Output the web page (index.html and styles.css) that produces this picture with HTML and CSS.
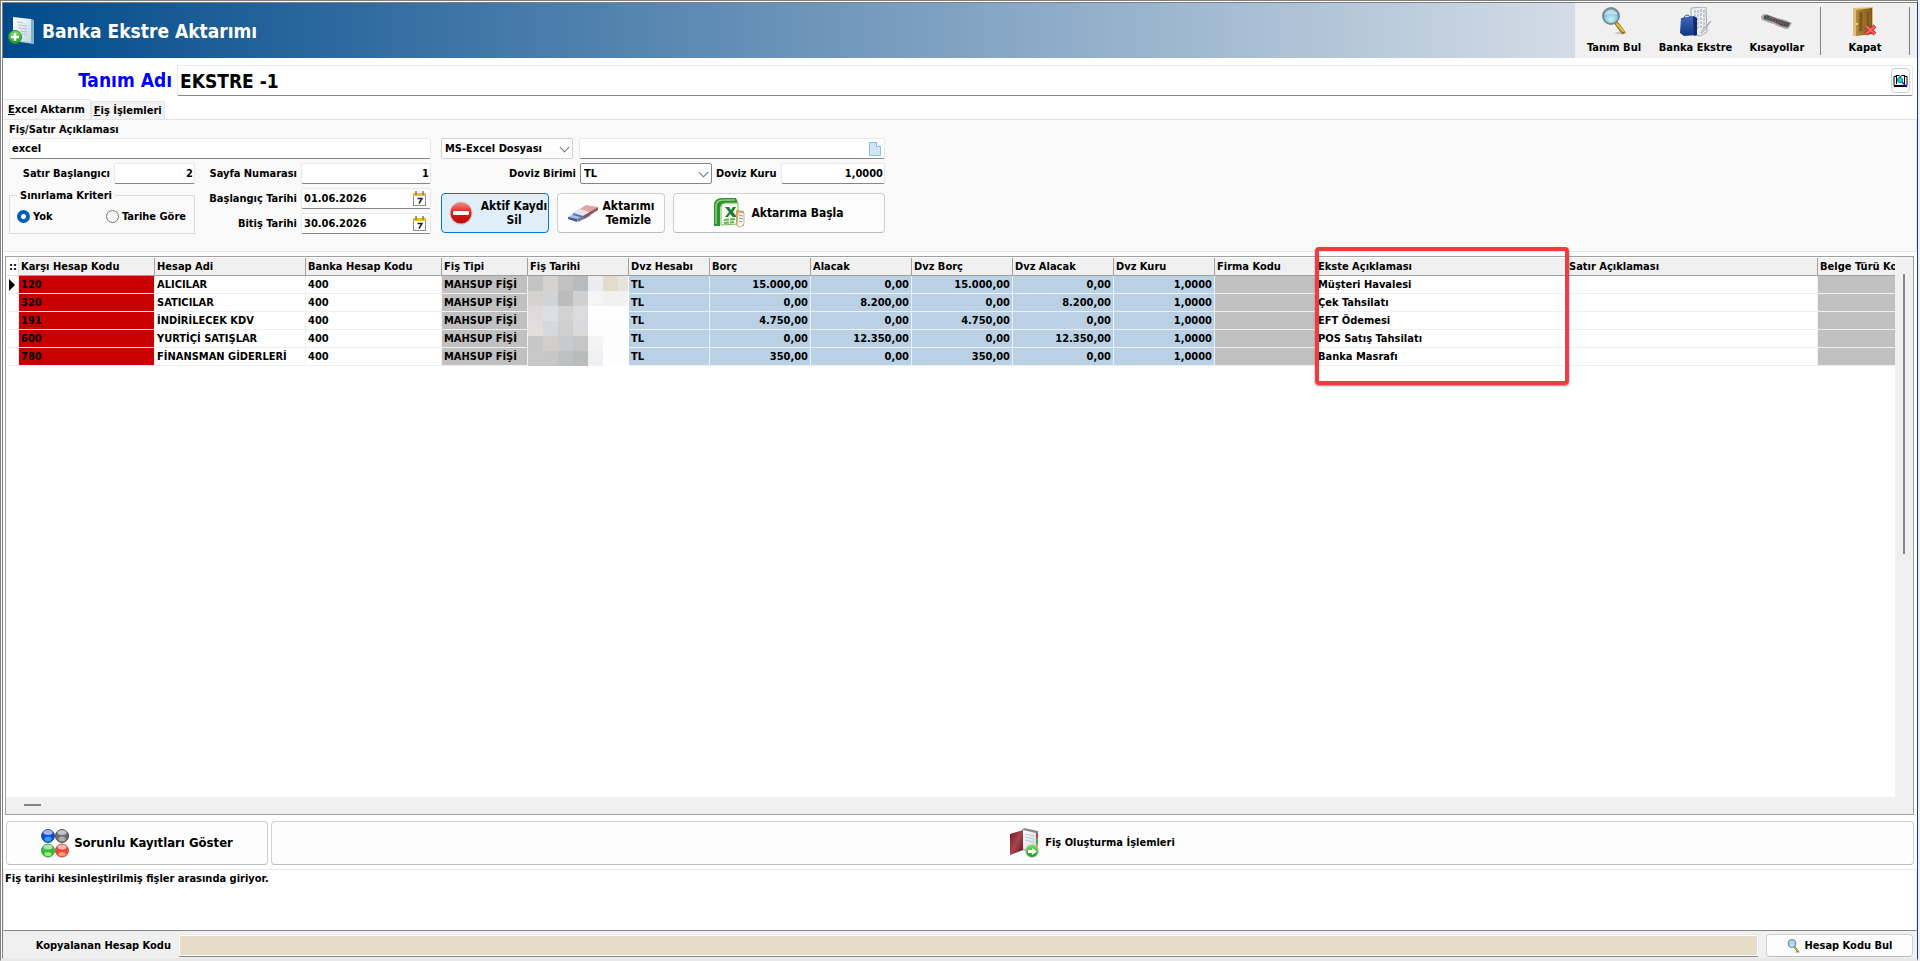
FILE: index.html
```html
<!DOCTYPE html>
<html lang="tr">
<head>
    <meta charset="UTF-8">
    <meta name="viewport" content="width=device-width, initial-scale=1.0">
    <title>Banka Ekstre Aktarımı</title>
    <link rel="stylesheet" href="styles.css">
</head>
<body>
<!-- shared gradients and the icons used more than once -->
<svg class="defs" width="0" height="0">
    <defs>
        <linearGradient id="gGreen" x1="0" y1="0" x2="0" y2="1"><stop offset="0" stop-color="#7ddc6a"/><stop offset="1" stop-color="#1d9a1d"/></linearGradient>
        <linearGradient id="gBlue" x1="0" y1="0" x2="0" y2="1"><stop offset="0" stop-color="#3d68c0"/><stop offset="1" stop-color="#143583"/></linearGradient>
        <linearGradient id="gDoor" x1="0" y1="0" x2="1" y2="0"><stop offset="0" stop-color="#b48a3e"/><stop offset="1" stop-color="#7d5413"/></linearGradient>
        <linearGradient id="gRed" x1="0" y1="0" x2="0" y2="1"><stop offset="0" stop-color="#f58a80"/><stop offset="0.5" stop-color="#e01a14"/><stop offset="1" stop-color="#b80d0d"/></linearGradient>
        <linearGradient id="gBook" x1="0" y1="0" x2="1" y2="1"><stop offset="0" stop-color="#6c1820"/><stop offset="0.5" stop-color="#a8464e"/><stop offset="1" stop-color="#5c1018"/></linearGradient>
        <linearGradient id="gPage" x1="0" y1="0" x2="1" y2="1"><stop offset="0" stop-color="#ffffff"/><stop offset="1" stop-color="#c3d6e2"/></linearGradient>
        <radialGradient id="gLens" cx="0.5" cy="0.7" r="0.7"><stop offset="0" stop-color="#c8f4fb"/><stop offset="1" stop-color="#5cabc9"/></radialGradient>
        <symbol id="icoSearch" viewBox="0 0 26 28">
            <ellipse cx="20" cy="26" rx="6" ry="1.5" fill="#c9c9c9"/>
            <path d="M14 15l3 3" stroke="#888" stroke-width="3"/>
            <path d="M16 17l6 8" stroke="#8a7418" stroke-width="4" stroke-linecap="round"/>
            <path d="M16 17l6 7" stroke="#e0c63a" stroke-width="2" stroke-linecap="round"/>
            <circle cx="10" cy="9" r="8" fill="url(#gLens)" stroke="#7c8a94" stroke-width="2"/>
            <path d="M4 8a6 5 0 0 1 12 0q-6-3-12 0z" fill="#fff" opacity="0.5"/>
        </symbol>
        <symbol id="icoCal" viewBox="0 0 14 16">
            <rect x="0.5" y="3.5" width="12" height="11" fill="#fff" stroke="#8d8d8d"/>
            <rect x="0" y="2" width="13" height="3" fill="#f2bd2a"/>
            <path d="M3 0v4M10 0v4" stroke="#777" stroke-width="1.5"/>
            <path d="M4.500 7.500h4.500l-3 5" fill="none" stroke="#222" stroke-width="1.500"/>
        </symbol>
    </defs>
</svg>

<div class="window">
    <header class="title-bar">
        <div class="title">
            <svg width="28" height="30" viewBox="0 0 28 30">
                <path d="M5 2l21 2v24l-21-3z" fill="#a8cddd"/>
                <path d="M5 1l18 2v23l-18-2z" fill="url(#gPage)"/>
                <path d="M23 3l3 1v24l-3-2z" fill="#7fb2c8"/>
                <path d="M9 6l6 1M10 9l9 1M10 12l9 1M12 15l7 1M14 18l5 1" stroke="#b8c0c5"/>
                <circle cx="7" cy="21" r="6.500" fill="url(#gGreen)" stroke="#2b8a2b"/>
                <path d="M7 17v8M3 21h8" stroke="#fff" stroke-width="2.500"/>
            </svg>
            <h1>Banka Ekstre Aktarımı</h1>
        </div>
        <nav class="toolbar">
            <button type="button" class="tool">
                <svg width="26" height="28"><use href="#icoSearch"/></svg>
                <span>Tanım Bul</span>
            </button>
            <button type="button" class="tool wide">
                <svg width="32" height="30" viewBox="0 0 32 30">
                    <path d="M11 1l15-1 1 25-7 4-9-2z" fill="#eceef1" stroke="#a4a9b0"/>
                    <path d="M15 3v8M18 3v19M21 2v20M24 3v20" stroke="#9aa0a8" stroke-dasharray="3 1"/>
                    <path d="M31 14l-8 11-2 1 1-3z" fill="#dfe3e6" stroke="#8f9499" stroke-width="0.700"/>
                    <path d="M1 11l12-2 4 2v17l-13 1-4-3z" fill="url(#gBlue)"/>
                    <path d="M13 9l4 2v17l-3 1z" fill="#12296a"/>
                    <path d="M4 12c0-5 6-5 6-1" fill="none" stroke="#1c3c8c"/>
                </svg>
                <span>Banka Ekstre</span>
            </button>
            <button type="button" class="tool">
                <svg width="32" height="28" viewBox="0 0 32 28">
                    <path d="M0 10q1-3 5-3l11 4q8 1 15 5l-3 5q-2 2-6 0-6-2-9-4-5-1-12-4z" fill="#a6a6a6"/>
                    <path d="M3 9l3-1 10 4 13 4-2 4-6-1-8-4-10-3z" fill="#4a4a4a"/>
                    <path d="M5 9.500l22 8M5 11.500l18 6M9 10l17 5" stroke="#8e8e8e" stroke-width="0.700" stroke-dasharray="1.500 1.500"/>
                    <path d="M13 12l2 1M18 15l2 1" stroke="#b33"/>
                </svg>
                <span>Kısayollar</span>
            </button>
            <button type="button" class="tool close">
                <svg width="26" height="30" viewBox="0 0 26 30">
                    <path d="M1 1l20-1v27l-20 2z" fill="#e0bf72"/>
                    <path d="M4 3l16-2v26l-16 2z" fill="url(#gDoor)"/>
                    <path d="M7 5l4-1v20l-4 1zM14 4l4-1v20l-4 1z" fill="#80581a" stroke="#a27a34" stroke-width="0.700"/>
                    <circle cx="5" cy="17" r="1" fill="#fbe597"/>
                    <path d="M14 19l9 8M23 19l-9 8" stroke="#a92525" stroke-width="4"/>
                    <path d="M14 19l9 8M23 19l-9 8" stroke="#f46060" stroke-width="2.500"/>
                </svg>
                <span>Kapat</span>
            </button>
        </nav>
    </header>

    <div class="name-row">
        <label for="tanim">Tanım Adı</label>
        <div class="field name-field">
            <input type="text" id="tanim" value="EKSTRE -1">
            <button type="button" class="look-up" aria-label="Ara">
                <svg width="15" height="14" viewBox="0 0 15 14">
                    <path d="M1 2.500h2v-1h3l1.500 1 1.500-1h3v1h2v9h-13z" fill="#fff" stroke="#000"/>
                    <path d="M3.500 2v8M11.500 2v8M1 12.500h12" stroke="#000"/>
                    <circle cx="7" cy="6" r="2.500" fill="#1fd8e8" stroke="#077"/>
                    <path d="M9 8l5 5" stroke="#2020c0" stroke-width="1.500"/>
                </svg>
            </button>
        </div>
    </div>

    <div class="tabs" role="tablist">
        <button type="button" role="tab" class="tab active"><u>E</u>xcel Aktarım</button>
        <button type="button" role="tab" class="tab"><u>F</u>iş İşlemleri</button>
    </div>

    <section class="panel">
        <label class="caption" for="aciklama">Fiş/Satır Açıklaması</label>
        <div class="form">
            <div class="left-form">
                <input type="text" class="field full" id="aciklama" value="excel">

                <div class="pair">
                    <label for="satir">Satır Başlangıcı</label>
                    <input type="text" class="field num" id="satir" value="2">
                </div>
                <label for="sayfa">Sayfa Numarası</label>
                <input type="text" class="field num" id="sayfa" value="1">

                <fieldset class="criteria">
                    <legend>Sınırlama Kriteri</legend>
                    <label><input type="radio" name="kriter" checked>Yok</label>
                    <label><input type="radio" name="kriter">Tarihe Göre</label>
                </fieldset>
                <label for="bas">Başlangıç Tarihi</label>
                <div class="field with-icon">
                    <input type="text" id="bas" value="01.06.2026">
                    <svg width="14" height="16"><use href="#icoCal"/></svg>
                </div>
                <label for="bitis">Bitiş Tarihi</label>
                <div class="field with-icon">
                    <input type="text" id="bitis" value="30.06.2026">
                    <svg width="14" height="16"><use href="#icoCal"/></svg>
                </div>
            </div>

            <div class="right-form">
                <div class="line">
                    <div class="drop soft">
                        <select aria-label="Dosya türü"><option>MS-Excel Dosyası</option></select>
                    </div>
                    <div class="field with-icon grow">
                        <input type="text" aria-label="Dosya">
                        <svg width="12" height="14" viewBox="0 0 12 14"><path d="M0.500 0.500h7l4 4v9h-11z" fill="#cfe5fa" stroke="#8ebbe8"/><path d="M7.500 0.500v4h4" fill="#fff" stroke="#8ebbe8"/></svg>
                    </div>
                </div>
                <div class="line currency">
                    <label for="birim">Doviz Birimi</label>
                    <div class="drop"><select id="birim"><option>TL</option></select></div>
                    <label for="kur">Doviz Kuru</label>
                    <input type="text" class="field num" id="kur" value="1,0000">
                </div>
                <div class="actions">
                    <button type="button" class="btn focused">
                        <svg width="24" height="24" viewBox="0 0 24 24">
                            <circle cx="12" cy="12" r="11.500" fill="#c9c9c9"/>
                            <circle cx="12" cy="12" r="10.500" fill="url(#gRed)"/>
                            <rect x="4" y="10" width="16" height="4" rx="1" fill="#fff"/>
                        </svg>
                        <span>Aktif Kaydı<br>Sil</span>
                    </button>
                    <button type="button" class="btn">
                        <svg width="30" height="20" viewBox="0 0 30 20">
                            <path d="M0 14l12-7 10 3-13 8z" fill="#a9c0e6"/>
                            <path d="M0 14l9 2v3l-9-3z" fill="#3d5a94"/>
                            <path d="M9 16l13-6v3l-12 6z" fill="#6780b4"/>
                            <path d="M5 10l13-8 12 2-15 9z" fill="#e2a3a3"/>
                            <path d="M5 10l7-4 10 3-7 4z" fill="#dce6f7"/>
                            <path d="M15 13l15-9v3l-14 9z" fill="#93535a"/>
                            <path d="M5 10l10 3v2l-10-3z" fill="#5871a6"/>
                        </svg>
                        <span>Aktarımı<br>Temizle</span>
                    </button>
                    <button type="button" class="btn">
                        <svg width="32" height="30" viewBox="0 0 32 30">
                            <path d="M0 28v-20q0-8 8-8h14l2 5h-12q-6 0-6 6v17z" fill="#2f8f28"/>
                            <path d="M2 26v-17q0-7 7-7h12" fill="none" stroke="#8ed47c" stroke-width="1.500"/>
                            <path d="M7 9q0-4 4-4h13v21l-17 1z" fill="#f3faf0" stroke="#76b667"/>
                            <path d="M11 9h4l2 3 2-3h3l-3 5 4 5h-4l-3-3-2 3h-3l4-5z" fill="#217a2b"/>
                            <path d="M10 22l12-1M10 25l10-1" stroke="#64b554" stroke-width="2" stroke-dasharray="5 1"/>
                            <path d="M22 12l8 1v15l-8-1z" fill="#d7a84a"/>
                            <path d="M24 14l6 1v11l-3 3-4-1z" fill="#f5f2e8" stroke="#a7a08d" stroke-width="0.700"/>
                            <path d="M25 17l4 1M25 20l4 1M25 23l3 1" stroke="#8c9bb0"/>
                        </svg>
                        <span>Aktarıma Başla</span>
                    </button>
                </div>
            </div>
        </div>
    </section>

    <section class="grid">
        <div class="grid-view">
            <table>
                <colgroup>
                    <col class="c-mark"><col class="c-code"><col class="c-name"><col class="c-code"><col class="c-type"><col class="c-money"><col class="c-cur">
                    <col class="c-money"><col class="c-money"><col class="c-money"><col class="c-money"><col class="c-money"><col class="c-money">
                    <col class="c-text"><col class="c-text"><col class="c-doc">
                </colgroup>
                <thead>
                    <tr>
                        <th class="mark">::</th><th>Karşı Hesap Kodu</th><th>Hesap Adi</th><th>Banka Hesap Kodu</th><th>Fiş Tipi</th><th>Fiş Tarihi</th><th>Dvz Hesabı</th>
                        <th>Borç</th><th>Alacak</th><th>Dvz Borç</th><th>Dvz Alacak</th><th>Dvz Kuru</th><th>Firma Kodu</th>
                        <th>Ekste Açıklaması</th><th>Satır Açıklaması</th><th>Belge Türü Kodu</th>
                    </tr>
                </thead>
                <tbody>
                    <tr>
                        <td class="mark"><svg width="6" height="12" viewBox="0 0 6 12"><path d="M0 0l6 6-6 6z"/></svg></td>
                        <td class="red">120</td><td>ALICILAR</td><td>400</td><td class="gray">MAHSUP FİŞİ</td>
                        <td class="masked" rowspan="5">
                            <svg width="100" height="90" viewBox="0 0 100 90" shape-rendering="crispEdges">
                                <g stroke-width="15">
                                    <path d="M0 7.500h15" stroke="#c3c3c3"/><path d="M15 7.500h15" stroke="#d3d2d1"/><path d="M30 7.500h15" stroke="#c4c2c0"/><path d="M45 7.500h15" stroke="#b9babb"/><path d="M60 7.500h15" stroke="#ebecef"/><path d="M75 7.500h15" stroke="#e3dccb"/><path d="M90 7.500h10" stroke="#e6e2dc"/>
                                    <path d="M0 22.500h15" stroke="#d5d3d0"/><path d="M15 22.500h15" stroke="#d1d3d5"/><path d="M30 22.500h15" stroke="#bcbcbc"/><path d="M45 22.500h15" stroke="#cfd0d2"/><path d="M60 22.500h15" stroke="#f5f5f5"/><path d="M75 22.500h25" stroke="#f1f1f1"/>
                                    <path d="M0 37.500h15" stroke="#dedadb"/><path d="M15 37.500h15" stroke="#dddfe1"/><path d="M30 37.500h15" stroke="#d2d2d2"/><path d="M45 37.500h15" stroke="#dadbde"/><path d="M60 37.500h40" stroke="#fefefe"/>
                                    <path d="M0 52.500h15" stroke="#e0dfdd"/><path d="M15 52.500h15" stroke="#d7d8d9"/><path d="M30 52.500h15" stroke="#cfcfcf"/><path d="M45 52.500h15" stroke="#d9dadc"/><path d="M60 52.500h40" stroke="#fcfcfc"/>
                                    <path d="M0 67.500h15" stroke="#c6c8c7"/><path d="M15 67.500h15" stroke="#d1cecb"/><path d="M30 67.500h15" stroke="#c8cacd"/><path d="M45 67.500h15" stroke="#c6c6c6"/><path d="M60 67.500h15" stroke="#f3f5f5"/><path d="M75 67.500h25" stroke="#fdfdfd"/>
                                    <path d="M0 82.500h15" stroke="#c8c8c8"/><path d="M15 82.500h15" stroke="#c7c7c5"/><path d="M30 82.500h15" stroke="#bec1c4"/><path d="M45 82.500h15" stroke="#babbbb"/><path d="M60 82.500h15" stroke="#eff0f3"/><path d="M75 82.500h25" stroke="#fdfdfd"/>
                                </g>
                            </svg>
                        </td>
                        <td class="blue">TL</td><td class="blue r">15.000,00</td><td class="blue r">0,00</td><td class="blue r">15.000,00</td><td class="blue r">0,00</td><td class="blue r">1,0000</td>
                        <td class="gray"></td><td>Müşteri Havalesi</td><td></td><td class="gray"></td>
                    </tr>
                    <tr>
                        <td class="mark"></td>
                        <td class="red">320</td><td>SATICILAR</td><td>400</td><td class="gray">MAHSUP FİŞİ</td>
                        <td class="blue">TL</td><td class="blue r">0,00</td><td class="blue r">8.200,00</td><td class="blue r">0,00</td><td class="blue r">8.200,00</td><td class="blue r">1,0000</td>
                        <td class="gray"></td><td>Çek Tahsilatı</td><td></td><td class="gray"></td>
                    </tr>
                    <tr>
                        <td class="mark"></td>
                        <td class="red">191</td><td>İNDİRİLECEK KDV</td><td>400</td><td class="gray">MAHSUP FİŞİ</td>
                        <td class="blue">TL</td><td class="blue r">4.750,00</td><td class="blue r">0,00</td><td class="blue r">4.750,00</td><td class="blue r">0,00</td><td class="blue r">1,0000</td>
                        <td class="gray"></td><td>EFT Ödemesi</td><td></td><td class="gray"></td>
                    </tr>
                    <tr>
                        <td class="mark"></td>
                        <td class="red">600</td><td>YURTİÇİ SATIŞLAR</td><td>400</td><td class="gray">MAHSUP FİŞİ</td>
                        <td class="blue">TL</td><td class="blue r">0,00</td><td class="blue r">12.350,00</td><td class="blue r">0,00</td><td class="blue r">12.350,00</td><td class="blue r">1,0000</td>
                        <td class="gray"></td><td>POS Satış Tahsilatı</td><td></td><td class="gray"></td>
                    </tr>
                    <tr>
                        <td class="mark"></td>
                        <td class="red">780</td><td>FİNANSMAN GİDERLERİ</td><td>400</td><td class="gray">MAHSUP FİŞİ</td>
                        <td class="blue">TL</td><td class="blue r">350,00</td><td class="blue r">0,00</td><td class="blue r">350,00</td><td class="blue r">0,00</td><td class="blue r">1,0000</td>
                        <td class="gray"></td><td>Banka Masrafı</td><td></td><td class="gray"></td>
                    </tr>
                </tbody>
            </table>
        </div>
        <div class="v-scroll"><div class="v-thumb"></div></div>
        <div class="h-scroll"><div class="h-thumb"></div></div>
        <div class="highlight"></div>
    </section>

    <div class="bottom-actions">
        <button type="button" class="btn big problems">
            <svg width="28" height="29" viewBox="0 0 28 29">
                <circle cx="7" cy="7" r="6.500" fill="#1745d8" stroke="#3b4f8c"/><circle cx="21" cy="7" r="6.500" fill="#6d6d6d" stroke="#505050"/>
                <circle cx="7" cy="21.500" r="6.500" fill="#38bd38" stroke="#4a944a"/><circle cx="21" cy="21.500" r="6.500" fill="#ee4a32" stroke="#b5554a"/>
                <g fill="#fff" opacity="0.600"><ellipse cx="7" cy="3.500" rx="4.500" ry="2.500"/><ellipse cx="21" cy="3.500" rx="4.500" ry="2.500"/><ellipse cx="7" cy="18" rx="4.500" ry="2.500"/><ellipse cx="21" cy="18" rx="4.500" ry="2.500"/></g>
                <ellipse cx="7" cy="10" rx="3.500" ry="2.500" fill="#29a8f0"/><ellipse cx="21" cy="10" rx="3.500" ry="2.500" fill="#aaa"/>
                <ellipse cx="7" cy="25" rx="3.500" ry="2" fill="#90f070"/><ellipse cx="21" cy="25" rx="3.500" ry="2" fill="#ff9a78"/>
            </svg>
            <span>Sorunlu Kayıtları Göster</span>
        </button>
        <button type="button" class="btn create">
            <svg width="30" height="30" viewBox="0 0 30 30">
                <path d="M12 2l2-2 14 3v22l-16-3z" fill="#8a8a8a"/>
                <path d="M13 2l13 3v19l-13-3z" fill="url(#gPage)"/>
                <path d="M15 6l9 2M15 9l9 2M15 12l9 2" stroke="#c0c8cc"/>
                <path d="M26 5h2v5h-2z" fill="#d33"/><path d="M26 11h2v4h-2z" fill="#3b3"/><path d="M26 16h2v4h-2z" fill="#e83"/>
                <path d="M0 6l13-4v20l-13 5z" fill="url(#gBook)"/>
                <circle cx="22" cy="23" r="6.500" fill="url(#gGreen)" stroke="#c9d8c9"/>
                <path d="M18 22h4v-2l5 3.500-5 3.500v-2h-4z" fill="#fff"/>
            </svg>
            <span>Fiş Oluşturma İşlemleri</span>
        </button>
    </div>

    <textarea class="log" aria-label="Mesajlar" readonly>Fiş tarihi kesinleştirilmiş fişler arasında giriyor.</textarea>

    <footer class="status">
        <label for="kopya">Kopyalanan Hesap Kodu</label>
        <input type="text" id="kopya" class="field copied">
        <button type="button" class="btn find">
            <svg width="13" height="14"><use href="#icoSearch"/></svg>
            <span>Hesap Kodu Bul</span>
        </button>
    </footer>
</div>
</body>
</html>
```
FILE: styles.css
```css
* {
    box-sizing: border-box;
}

body {
    margin: 0;
    background-color: #f0f0f0;
    font-family: "DejaVu Sans Condensed", "DejaVu Sans", sans-serif;
    font-size: 11px;
    font-weight: bold;
    line-height: 14px;
    color: #000;
}

button, input, select, textarea {
    font: inherit;
    color: inherit;
}

svg {
    display: block;
    flex: none;
}

.defs {
    position: absolute;
}

.window {
    display: flex;
    flex-direction: column;
    height: 100vh;
    margin-right: 2px;
    border: 3px double #808080;
    border-right: 1px solid #16398c;
    border-bottom: 3px solid #e8e8e8;
    background-color: #fff;
}

/* title bar */
.title-bar {
    display: flex;
    height: 55px;
    background: linear-gradient(to right, #004a8b, #d3dce6 82%);
}

.title {
    display: flex;
    align-items: center;
    gap: 6px;
    flex: 1;
    padding-left: 5px;
}

.title h1 {
    margin: 0;
    font-size: 19px;
    line-height: 24px;
    color: #fff;
}

.toolbar {
    display: flex;
    padding: 4px 7px 3px 0;
    background-color: #f0f0f0;
}

.tool {
    display: flex;
    flex-direction: column;
    align-items: center;
    justify-content: space-between;
    width: 78px;
    padding: 0;
    border: none;
    background: none;
    white-space: nowrap;
}

.tool.wide {
    width: 85px;
}

.tool.close {
    width: 90px;
    margin-left: 4px;
    border-left: 1px solid #808080;
    border-right: 1px solid #808080;
}

/* definition name */
.name-row {
    display: flex;
    gap: 5px;
    padding: 7px 4px 3px 0;
}

.name-row label {
    width: 169px;
    font-size: 19px;
    line-height: 30px;
    text-align: right;
    color: #00f;
}

.field {
    min-width: 0;
    height: 21px;
    padding: 0 2px;
    border: 1px solid #e8e8e8;
    border-bottom-color: #868686;
    border-radius: 2px;
    background-color: #fff;
}

.name-field {
    display: flex;
    align-items: center;
    flex: 1;
    height: 31px;
    font-size: 19px;
}

.name-field input,
.with-icon input {
    flex: 1;
    min-width: 0;
    padding: 0;
    border: none;
    background: none;
    outline: none;
}

.look-up {
    display: flex;
    align-items: center;
    justify-content: center;
    width: 19px;
    height: 25px;
    padding: 0;
    border: 1px solid #d0d0d0;
    border-radius: 4px;
    background-color: #fdfdfd;
}

/* tabs */
.tabs {
    display: flex;
    align-items: flex-end;
}

.tab {
    height: 18px;
    padding: 0 2px;
    border: 1px solid #e5e5e5;
    border-bottom: none;
    background-color: #f3f3f3;
}

.tab.active {
    height: 20px;
    padding: 0 5px;
    border-left: none;
    background-color: #f9f9f9;
}

.panel {
    padding: 3px 6px 17px;
    border: 1px solid #e5e5e5;
    border-left: none;
    background-color: #f9f9f9;
}

.caption {
    display: block;
    margin-bottom: 1px;
}

.form {
    display: flex;
    gap: 10px;
}

.left-form {
    display: grid;
    grid-template-columns: 186px 102px 130px;
    grid-template-rows: repeat(4, 21px);
    row-gap: 4px;
    column-gap: 2px;
    align-items: center;
}

.left-form > label {
    padding-right: 2px;
    text-align: right;
}

.full {
    grid-column: 1 / -1;
}

.pair {
    display: flex;
    align-items: center;
    justify-content: flex-end;
    gap: 4px;
}

.pair .field {
    width: 81px;
}

.num {
    padding-right: 1px;
    text-align: right;
}

.with-icon {
    display: flex;
    align-items: center;
    padding-right: 3px;
}

.grow {
    flex: 1;
}

.criteria {
    display: flex;
    grid-row: 3 / span 2;
    justify-content: space-between;
    align-items: flex-end;
    min-width: 0;
    height: 45px;
    margin: 0;
    padding: 0 8px 9px 7px;
    border: 1px solid #dcdcdc;
}

.criteria legend {
    padding: 0 3px;
}

.criteria label {
    display: flex;
    align-items: center;
    gap: 3px;
}

.criteria input {
    appearance: none;
    width: 13px;
    height: 13px;
    margin: 0;
    border: 1px solid #7a7a7a;
    border-radius: 50%;
    background-color: #f4f4f4;
}

.criteria input:checked {
    border: 4px solid #005fb8;
    background-color: #fff;
}

.right-form {
    width: 444px;
}

.line {
    display: flex;
    gap: 6px;
    margin-bottom: 4px;
}

.currency {
    gap: 4px;
    align-items: center;
}

.currency label:first-child {
    width: 135px;
    text-align: right;
}

.currency .field {
    flex: 1;
}

.drop {
    position: relative;
    width: 132px;
}

.drop select {
    appearance: none;
    display: block;
    width: 100%;
    height: 21px;
    padding: 0 3px;
    border: 1px solid #868686;
    border-radius: 2px;
    background-color: #fff;
}

.drop.soft select {
    border-color: #d0d0d0;
    background-color: #fdfdfd;
}

.drop::after {
    content: "";
    position: absolute;
    top: 6px;
    right: 5px;
    width: 6px;
    height: 6px;
    border-right: 1px solid #777;
    border-bottom: 1px solid #777;
    transform: rotate(45deg);
    pointer-events: none;
}

/* buttons */
.btn {
    display: flex;
    align-items: center;
    justify-content: center;
    gap: 5px;
    padding: 0;
    border: 1px solid #d0d0d0;
    border-bottom-color: #bcbcbc;
    border-radius: 4px;
    background-color: #fdfdfd;
    white-space: nowrap;
}

.actions {
    display: grid;
    grid-template-columns: 108px 108px 1fr;
    gap: 8px;
    margin-top: 9px;
}

.actions .btn {
    height: 40px;
    font-size: 12px;
}

.btn.focused {
    gap: 8px;
    padding-left: 6px;
    border-color: #0078d4;
    background-color: #e0eef9;
}

/* data grid */
.grid {
    position: relative;
    display: grid;
    grid-template-columns: 1fr 18px;
    grid-template-rows: 1fr 17px;
    flex: 1;
    min-height: 0;
    margin: 4px 3px 6px 2px;
    border: 1px solid #a0a0a0;
}

.grid-view {
    min-width: 0;
    overflow: hidden;
    padding: 1px;
}

table {
    width: 1900px;
    table-layout: fixed;
    border-collapse: separate;
    border-spacing: 0;
}

.c-mark { width: 12px; }
.c-code { width: 136px; }
.c-name { width: 151px; }
.c-type { width: 86px; }
.c-money { width: 101px; }
.c-cur { width: 81px; }
.c-text { width: 251px; }

th, td {
    height: 18px;
    padding: 0 2px;
    overflow: hidden;
    line-height: 16px;
    text-align: left;
    white-space: nowrap;
    border-right: 1px solid #f0f0f0;
    border-bottom: 1px solid #f0f0f0;
}

th {
    border-right-color: #a0a0a0;
    border-bottom-color: #a0a0a0;
    background-color: #f0f0f0;
}

th.mark {
    border-color: #e0e0e0;
    background-color: #fff;
}

.mark {
    padding: 0 0 0 2px;
}

.red { background-color: #c80000; }
.gray { background-color: #c0c0c0; }
.blue { background-color: #bad0e4; }

.r {
    text-align: right;
}

.masked {
    padding: 0;
    border: none;
    vertical-align: top;
}

.v-scroll, .h-scroll {
    background-color: #f0f0f0;
}

.v-thumb {
    width: 2px;
    height: 280px;
    margin: 17px 0 0 8px;
    background-color: #868686;
}

.h-scroll {
    grid-column: 1 / -1;
    padding: 7px 0 0 18px;
}

.h-thumb {
    width: 17px;
    height: 2px;
    background-color: #868686;
}

/* frame round the statement description column */
.highlight {
    position: absolute;
    top: -10px;
    left: 1309px;
    width: 254px;
    height: 138px;
    border: 4px solid #f03c3c;
    border-radius: 4px;
    box-shadow: 0 1px 2px #888;
}

/* lower part */
.bottom-actions {
    display: flex;
    gap: 3px;
    padding: 0 3px 4px;
}

.bottom-actions .btn {
    height: 44px;
}

.problems {
    width: 262px;
}

.big {
    font-size: 13px;
}

.create {
    flex: 1;
}

.log {
    display: block;
    height: 62px;
    padding: 2px 1px;
    border: 1px solid #e8e8e8;
    border-bottom-color: #868686;
    outline: none;
    resize: none;
}

.status {
    display: flex;
    align-items: center;
    gap: 7px;
    padding: 3px 4px 1px 0;
    background-color: #f0f0f0;
}

.status label {
    width: 168px;
    text-align: right;
}

.status .copied {
    flex: 1;
    height: 23px;
    background-color: #e6dcc8;
    box-shadow: inset 0 0 0 1px #fff;
}

.find {
    width: 147px;
    height: 23px;
}
```
